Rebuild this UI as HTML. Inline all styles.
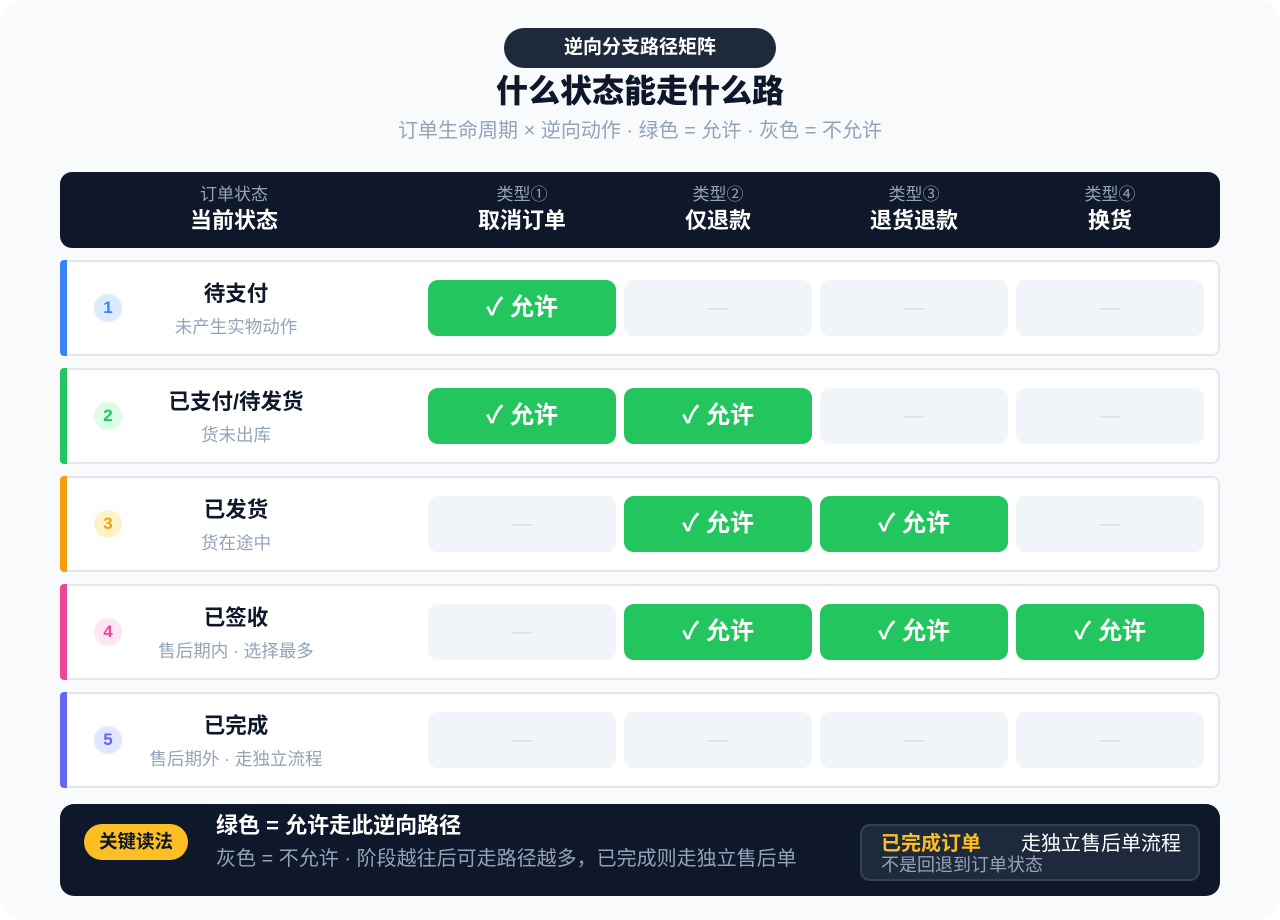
<!DOCTYPE html>
<html><head><meta charset="utf-8"><style>
*{margin:0;padding:0;box-sizing:border-box}
body{width:1280px;height:920px;background:#fff;font-family:"Liberation Sans","Noto Sans CJK SC",sans-serif;overflow:hidden}
.card{position:absolute;left:0;top:0;width:1280px;height:920px;background:#f8fafc;border-radius:22px}
.pill{position:absolute;left:504px;top:28px;width:272px;height:40px;border-radius:20px;background:#1e293b;color:#fff;font-weight:700;font-size:19px;text-align:center;line-height:40px}
.h1{position:absolute;left:0;width:1280px;top:69px;text-align:center;font-size:32px;font-weight:900;color:#0f172a;line-height:44px}
.sub{position:absolute;left:0;width:1280px;top:117px;text-align:center;font-size:20px;color:#94a3b8;line-height:28px}
.head{position:absolute;left:60px;top:172px;width:1160px;height:76px;background:#0f172a;border-radius:12px}
.hc{position:absolute;top:11px;text-align:center;width:188px}
.hc .s{font-size:17px;color:#94a3b8;line-height:24px}
.hc .b{font-size:22px;color:#fff;font-weight:700;line-height:28px}
.row{position:absolute;left:60px;width:1160px;height:96px;background:#fff;border:2px solid #e2e8f0;border-radius:8px}
.bar{position:absolute;left:-2px;top:-2px;width:7px;height:96px;border-radius:4px 0 0 4px}
.num{position:absolute;left:32px;top:32px;width:28px;height:28px;border-radius:50%;text-align:center;line-height:28px;font-size:17px;font-weight:700}
.t{position:absolute;left:54px;width:240px;text-align:center;top:17px;font-size:21.5px;font-weight:700;color:#0f172a;line-height:30px}
.d{position:absolute;left:54px;width:240px;text-align:center;top:53px;font-size:17.5px;color:#94a3b8;line-height:24px}
.c{position:absolute;top:18px;width:188px;height:56px;border-radius:10px;background:#f1f5f9;text-align:center;line-height:56px;color:#d7dde5;font-size:20px}
.c.g{background:#22c55e;color:#fff;font-weight:700;font-size:24px}
.foot{position:absolute;left:60px;top:804px;width:1160px;height:92px;background:#0f172a;border-radius:14px}
</style></head><body>
<div class="card"></div>
<div class="pill">逆向分支路径矩阵</div>
<div class="h1">什么状态能走什么路</div>
<div class="sub">订单生命周期 × 逆向动作 · 绿色 = 允许 · 灰色 = 不允许</div>
<div class="head">
 <div class="hc" style="left:78px;width:192px"><div class="s">订单状态</div><div class="b">当前状态</div></div>
 <div class="hc" style="left:368px"><div class="s">类型①</div><div class="b">取消订单</div></div>
 <div class="hc" style="left:564px"><div class="s">类型②</div><div class="b">仅退款</div></div>
 <div class="hc" style="left:760px"><div class="s">类型③</div><div class="b">退货退款</div></div>
 <div class="hc" style="left:956px"><div class="s">类型④</div><div class="b">换货</div></div>
</div>

<div class="row" style="top:260px"><div class="bar" style="background:#3b82f6"></div><div class="num" style="background:#dbeafe;color:#3b82f6">1</div><div class="t">待支付</div><div class="d">未产生实物动作</div>
<div class="c g" style="left:366px">✓ 允许</div><div class="c" style="left:562px">—</div><div class="c" style="left:758px">—</div><div class="c" style="left:954px">—</div></div>

<div class="row" style="top:368px"><div class="bar" style="background:#22c55e"></div><div class="num" style="background:#dcfce7;color:#22c55e">2</div><div class="t">已支付/待发货</div><div class="d">货未出库</div>
<div class="c g" style="left:366px">✓ 允许</div><div class="c g" style="left:562px">✓ 允许</div><div class="c" style="left:758px">—</div><div class="c" style="left:954px">—</div></div>

<div class="row" style="top:476px"><div class="bar" style="background:#f59e0b"></div><div class="num" style="background:#fef3c7;color:#f59e0b">3</div><div class="t">已发货</div><div class="d">货在途中</div>
<div class="c" style="left:366px">—</div><div class="c g" style="left:562px">✓ 允许</div><div class="c g" style="left:758px">✓ 允许</div><div class="c" style="left:954px">—</div></div>

<div class="row" style="top:584px"><div class="bar" style="background:#ec4899"></div><div class="num" style="background:#fce7f3;color:#ec4899">4</div><div class="t">已签收</div><div class="d">售后期内 · 选择最多</div>
<div class="c" style="left:366px">—</div><div class="c g" style="left:562px">✓ 允许</div><div class="c g" style="left:758px">✓ 允许</div><div class="c g" style="left:954px">✓ 允许</div></div>

<div class="row" style="top:692px"><div class="bar" style="background:#6366f1"></div><div class="num" style="background:#e0e7ff;color:#6366f1">5</div><div class="t">已完成</div><div class="d">售后期外 · 走独立流程</div>
<div class="c" style="left:366px">—</div><div class="c" style="left:562px">—</div><div class="c" style="left:758px">—</div><div class="c" style="left:954px">—</div></div>

<div class="foot">
 <div style="position:absolute;left:24px;top:20px;width:104px;height:36px;border-radius:18px;background:#fbbf24;color:#0f172a;font-weight:700;font-size:18.5px;text-align:center;line-height:36px">关键读法</div>
 <div style="position:absolute;left:156px;top:7px;font-size:22px;font-weight:700;color:#fff;line-height:30px">绿色 = 允许走此逆向路径</div>
 <div style="position:absolute;left:156px;top:41px;font-size:20px;color:#94a3b8;line-height:28px">灰色 = 不允许 · 阶段越往后可走路径越多，已完成则走独立售后单</div>
 <div style="position:absolute;left:800px;top:20px;width:340px;height:57px;border-radius:10px;background:#1e293b;border:2px solid #334155">
  <div style="position:absolute;left:19px;top:4px;font-size:20px;font-weight:700;color:#fbbf24;line-height:28px">已完成订单</div>
  <div style="position:absolute;left:159px;top:4px;font-size:20px;color:#fff;line-height:28px">走独立售后单流程</div>
  <div style="position:absolute;left:19px;top:28px;font-size:18px;color:#94a3b8;line-height:22px">不是回退到订单状态</div>
 </div>
</div>
</body></html>
